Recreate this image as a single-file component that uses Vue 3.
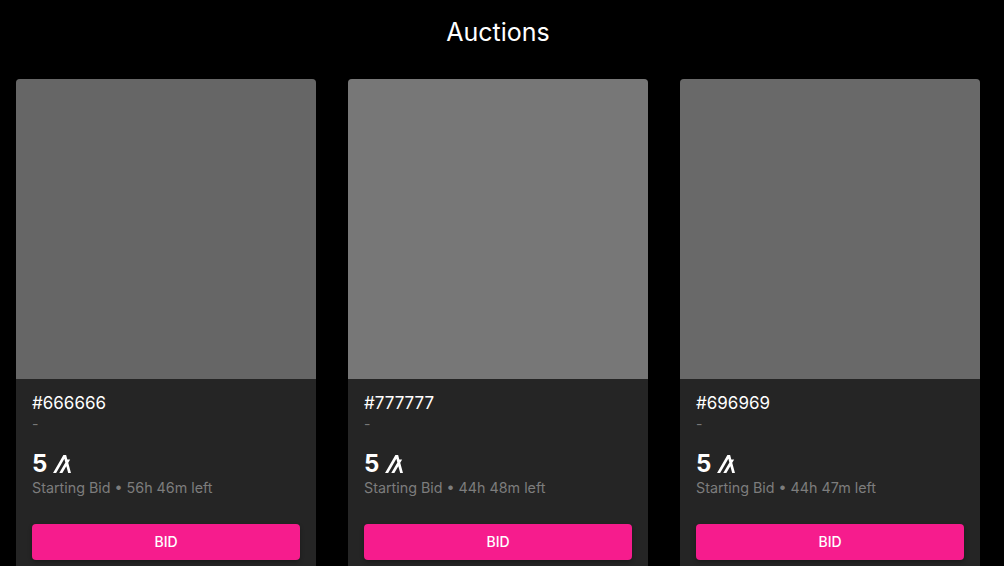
<script setup>
// auction cards shown on the page
const auctions = [
  { id: 1, name: '#666666', color: '#666666', price: 5, time: '56h 46m left' },
  { id: 2, name: '#777777', color: '#777777', price: 5, time: '44h 48m left' },
  { id: 3, name: '#696969', color: '#696969', price: 5, time: '44h 47m left' }
];
</script>

<template>
  <div class="page">
    <h1 class="title">Auctions</h1>
    <div class="grid">
      <div v-for="item in auctions" :key="item.id" class="card">
        <div class="swatch" :style="{ background: item.color }"></div>
        <div class="info">
          <div class="name">{{ item.name }}</div>
          <div class="desc">-</div>
          <div class="price">
            <span>{{ item.price }}</span>
            <svg class="algo" viewBox="0 0 113 113.4" aria-hidden="true">
              <path d="M19.6 113.4l16.4-28.4 16.4-28.3 16.3-28.4 2.7-4.5 1.2 4.5 5 18.7-5.6 9.7-16.4 28.3-16.3 28.4h19.6l16.4-28.4 8.5-14.7 4 14.7 7.6 28.4H113l-7.6-28.4-7.6-28.3-2-7.3 12.2-21.2H90.2l-.6-2.1-6.2-23.2-.8-3H65.5l-.4.6-16 27.7-16.4 28.3-16.3 28.4L0 113.4h19.6z" />
            </svg>
          </div>
          <div class="meta">Starting Bid • {{ item.time }}</div>
          <button class="bid">BID</button>
        </div>
      </div>
    </div>
  </div>
</template>

<style>
html, body {
  margin: 0;
  background: #000;
  overflow: hidden;
}
</style>

<style scoped>
.page {
  width: 996px;
  height: 566px;
  overflow: hidden;
  background: #000;
  color: #fff;
  font-family: "Inter", "Noto Sans", sans-serif;
}
.title {
  margin: 0;
  padding-top: 17px;
  height: 62px;
  box-sizing: border-box;
  text-align: center;
  font-size: 25px;
  line-height: 30px;
  font-weight: 400;
}
.grid {
  display: grid;
  grid-template-columns: repeat(3, 300px);
  gap: 32px;
  padding: 17px 16px 16px;
}
.card {
  background: #252525;
  border-radius: 4px;
  overflow: hidden;
}
.swatch {
  height: 300px;
}
.info {
  padding: 13px 16px 16px;
}
.name {
  font-size: 17px;
  line-height: 22px;
}
.desc {
  font-size: 14px;
  line-height: 20px;
  color: #777;
}
.price {
  display: flex;
  align-items: center;
  gap: 6px;
  margin-top: 15px;
  height: 28px;
  font-size: 24px;
  font-weight: 700;
}
.algo {
  width: 18px;
  height: 18px;
  fill: #fff;
  margin-top: 2px;
}
.meta {
  margin-top: 1px;
  font-size: 14.3px;
  line-height: 20px;
  color: #7d7d7d;
}
.bid {
  display: block;
  width: 100%;
  height: 36px;
  margin-top: 26px;
  padding: 0 0 2px;
  border: 0;
  border-radius: 4px;
  background: #f61c8d;
  color: #fff;
  font-family: inherit;
  font-size: 14px;
  font-weight: 500;
  box-shadow: 0 2px 4px rgba(0, 0, 0, 0.3);
}
</style>
